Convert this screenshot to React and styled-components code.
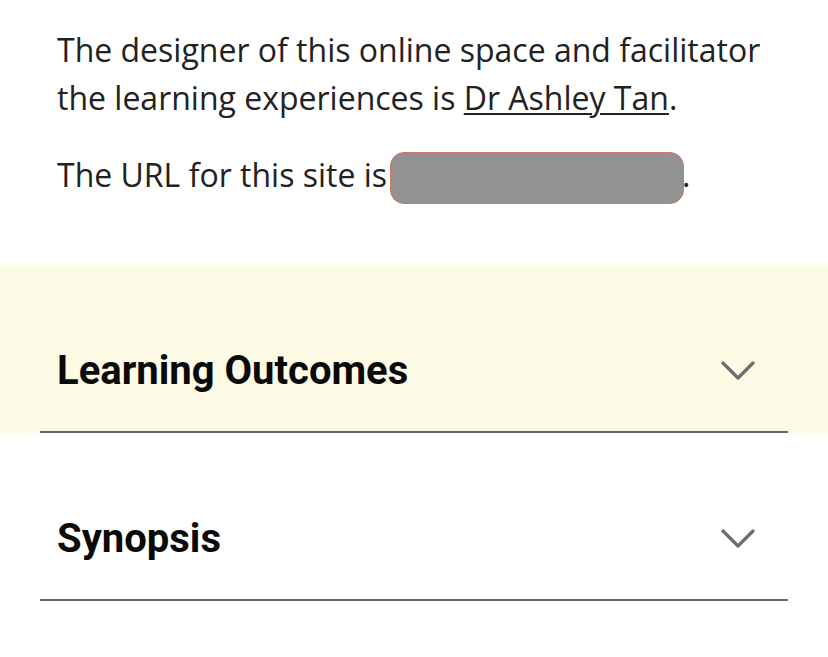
import React from 'react';
import styled, { createGlobalStyle } from 'styled-components';

const GlobalStyle = createGlobalStyle`
  body {
    margin: 0;
    background: #fff;
  }
`;

const Page = styled.div`
  width: 828px;
  overflow: hidden;
`;

const Intro = styled.div`
  padding: 26px 50px 0 57px;
`;

const Para = styled.p`
  margin: 0 0 29px;
  font-family: 'Open Sans', 'Liberation Sans', sans-serif;
  font-size: 32px;
  line-height: 48px;
  color: #222;
`;

const Person = styled.a`
  color: inherit;
  text-decoration: underline;
  text-decoration-thickness: 2px;
  text-underline-offset: 3px;
`;

const Redacted = styled.span`
  display: inline-block;
  width: 292px;
  height: 50px;
  margin-left: 3px;
  margin-right: -2px;
  vertical-align: -17px;
  background: #929292;
  border: 1px solid #d3765f;
  border-radius: 14px;
`;

const Accordion = styled.div`
  margin-top: 61px;
`;

const Item = styled.div`
  background: ${p => (p.$active ? '#fdfae6' : 'transparent')};
`;

const ItemInner = styled.div`
  margin: 0 40px;
  padding: 80px 33px 34px 17px;
  border-bottom: 2px solid #666;
  display: flex;
  align-items: center;
  justify-content: space-between;
`;

const Title = styled.h3`
  margin: 0;
  font-family: Roboto, 'Liberation Sans', sans-serif;
  font-weight: 700;
  font-size: 40px;
  line-height: 52px;
  color: #0a0a0a;
`;

const Chevron = () => (
  <svg width="34" height="22" viewBox="0 0 34 22" fill="none">
    <polyline
      points="2,3 17,18 32,3"
      stroke="#6e6e6e"
      strokeWidth="3.2"
      strokeLinecap="round"
      strokeLinejoin="round"
    />
  </svg>
);

const sections = ['Learning Outcomes', 'Synopsis'];

export default function App() {
  return (
    <Page>
      <GlobalStyle />
      <Intro>
        <Para>
          The designer of this online space and facilitator the learning
          experiences is <Person href="#">Dr Ashley Tan</Person>.
        </Para>
        <Para>
          The URL for this site is<Redacted />.
        </Para>
      </Intro>
      <Accordion>
        {sections.map((title, i) => (
          <Item key={title} $active={i === 0}>
            <ItemInner>
              <Title>{title}</Title>
              <Chevron />
            </ItemInner>
          </Item>
        ))}
      </Accordion>
    </Page>
  );
}
